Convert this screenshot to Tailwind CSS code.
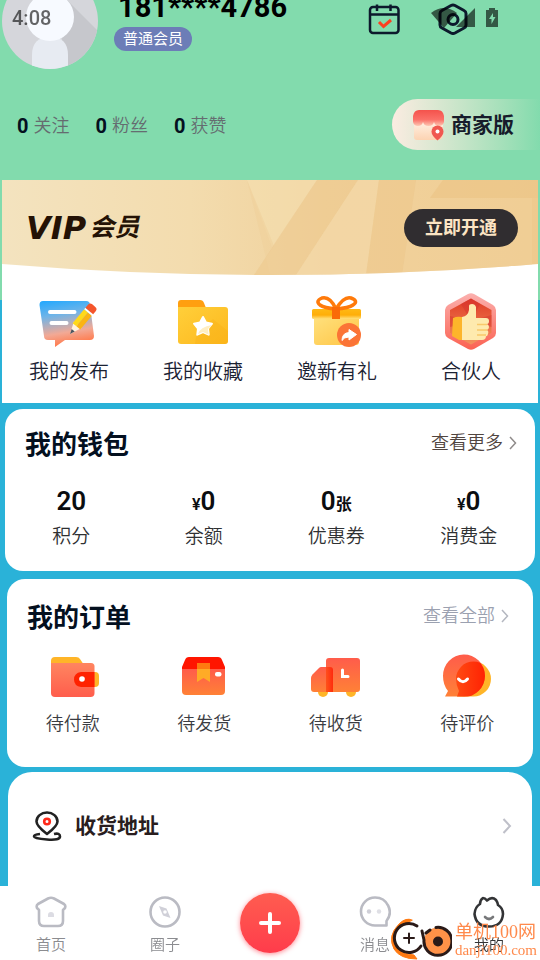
<!DOCTYPE html>
<html lang="zh-CN">
<head>
  <meta charset="UTF-8" />
  <meta name="viewport" content="width=device-width, initial-scale=1.0" />
  <title>我的</title>
  <script src="https://cdn.jsdelivr.net/npm/@tailwindcss/browser@4"></script>
</head>
<body class="min-h-screen overflow-x-hidden bg-[#2ab2d8] bg-[linear-gradient(#82dbad_300px,#2ab2d8_300px)] font-['Roboto','Noto_Sans_CJK_SC',sans-serif] text-[#1b2233]">

  <!-- Status bar -->
  <div class="fixed inset-x-0 top-0 z-20 flex h-9 items-center justify-between pl-3 pr-10 pointer-events-none">
    <span class="text-xl font-medium text-black/60">4:08</span>
    <svg class="h-5 w-[70px]" viewBox="0 0 70 20" fill="#000" fill-opacity=".6">
      <path d="M1 5Q14 -5 27 5L14 20Z" />
      <path d="M45 0V19H26Z" />
      <path d="M59 2V0h6v2h3v17H56V2ZM63 5l-4 6h2.500v5l4-7h-2.500Z" fill-rule="evenodd" />
    </svg>
  </div>

  <!-- Profile header -->
  <header>
    <div class="-mt-[27px] flex items-start pl-0.5 pr-[71px]">
      <svg class="size-24 shrink-0 rounded-full" viewBox="0 0 96 96">
        <rect width="96" height="96" fill="#d5d6db" />
        <path d="M65 27L96 58V96H64L60 66Z" fill="#c6c7cc" />
        <path d="M30 96V82q0-18 18-18t18 18v14Z" fill="#e7ebf2" />
        <circle cx="48" cy="44" r="24" fill="#f7faff" />
      </svg>
      <div class="ml-4 pt-[18px]">
        <h1 class="ml-1 text-[29px] font-bold leading-8 text-black">181****4786</h1>
        <p class="mt-1 inline-block rounded-full bg-[#6c7db7] px-[9px] text-[15px] leading-6 text-white">普通会员</p>
      </div>
      <div class="ml-auto flex gap-[37px] pt-[30px]">
        <button aria-label="签到">
          <svg class="size-8" viewBox="0 0 32 32" fill="none" stroke="#0c1a2c" stroke-width="2.500">
            <rect x="2" y="4" width="28.500" height="26" rx="3" />
            <path d="M2 11.500H30M9 1.500V8M22.500 1.500V8" />
            <path d="M11 19l4.500 4.500L23 17" stroke="#fb4020" stroke-width="3" />
          </svg>
        </button>
        <button aria-label="设置">
          <svg class="size-8" viewBox="0 0 32 32" fill="none" stroke="#0c1a2c" stroke-width="3">
            <path d="M14 2.500q2-1 4 0L27 7.500q2 1 2 3V22q0 2-2 3l-9 5q-2 1-4 0L5 25q-2-1-2-3V10.500q0-2 2-3Z" />
            <circle cx="16" cy="16.500" r="5" />
          </svg>
        </button>
      </div>
    </div>

    <div class="mt-[30px] mb-[30px] flex items-center justify-between pl-[17px]">
      <ul class="flex gap-[26px] pt-[3px] text-lg text-[#656c70]">
        <li class="flex items-center gap-[5px]"><b class="text-xl text-[#04101f]">0</b><span class="font-[350]">关注</span></li>
        <li class="flex items-center gap-[5px]"><b class="text-xl text-[#04101f]">0</b><span class="font-[350]">粉丝</span></li>
        <li class="flex items-center gap-[5px]"><b class="text-xl text-[#04101f]">0</b><span class="font-[350]">获赞</span></li>
      </ul>
      <a href="#" class="flex h-[51px] items-center gap-[7px] rounded-l-full bg-linear-to-r from-[#fbece1] to-[#82dbad] pl-5 pr-[26px] text-[21px] font-bold text-[#171c2b]">
        <svg class="size-8" viewBox="0 0 32 32">
          <defs>
            <linearGradient id="awning" x2="0" y2="1"><stop offset="0" stop-color="#f4524c" /><stop offset=".6" stop-color="#fb7068" /><stop offset="1" stop-color="#fdc9b4" /></linearGradient>
            <linearGradient id="shop" x2="0" y2="1"><stop stop-color="#fff0e2" /><stop offset="1" stop-color="#fcd3b2" /></linearGradient>
          </defs>
          <path d="M2 13H31V26q0 5-5 5H5q-3 0-3-3Z" fill="url(#shop)" />
          <path d="M7 1H26q5 0 6 6v6q-1 4-5 4t-5-4q-1 4-5.500 4t-5.500-4q-1 4-5 4t-5-4V7q1-6 6-6Z" fill="url(#awning)" />
          <path d="M25.500 31.500q-6-5-6-9a6 6 0 0 1 12 0q0 4-6 9Z" fill="#f05850" />
          <circle cx="25.500" cy="22.500" r="2" fill="#fff" />
        </svg>
        <span class="pt-[3px]">商家版</span>
      </a>
    </div>
  </header>

  <main class="pb-[74px]">
    <!-- VIP banner and shortcuts -->
    <section class="mx-0.5 bg-white">
      <div class="relative flex h-[95px] items-center justify-between pl-6 pr-5">
        <svg class="absolute inset-0 size-full" viewBox="0 0 536 95" preserveAspectRatio="none">
          <defs>
            <linearGradient id="gold"><stop offset="0" stop-color="#f3e3bf" /><stop offset=".35" stop-color="#f3dcae" /><stop offset=".6" stop-color="#f0d19c" /><stop offset="1" stop-color="#efca8e" /></linearGradient>
            <clipPath id="curve"><path d="M0 0H536V84Q268 106 0 84Z" /></clipPath>
          </defs>
          <g clip-path="url(#curve)">
            <rect width="536" height="95" fill="url(#gold)" />
            <path d="M245 0H315L270 67Z" fill="#f5dfb1" opacity=".6" />
            <path d="M245 0L272 66L252 95H268Q255 40 245 0Z" fill="#efd09a" opacity=".5" />
            <path d="M315 0H356L294 95H252Z" fill="#edc88b" opacity=".45" />
            <path d="M356 0H377L364 95H294Z" fill="#f3d9a8" opacity=".7" />
            <path d="M377 0H414L400 95H364Z" fill="#edc88c" opacity=".5" />
            <path d="M414 0H441L428 18H530V95H400Z" fill="#f2d29b" opacity=".5" />
            <path d="M441 0H536V18H428Z" fill="#ecc689" opacity=".7" />
          </g>
        </svg>
        <h2 class="relative flex items-center gap-[3px] font-bold italic text-[#241205]">
          <span class="font-['DejaVu_Sans',sans-serif] text-[32px] leading-8">VIP</span>
          <span class="text-[25px] leading-8">会员</span>
        </h2>
        <button class="relative h-[38px] rounded-full bg-[#302d30] px-[21px] text-lg font-bold text-[#fce4c3]">立即开通</button>
      </div>

      <nav class="grid grid-cols-4 pt-4 pb-4 text-xl leading-[30px]">
        <a href="#" class="flex flex-col items-center gap-1.5">
          <svg class="size-15" viewBox="0 0 60 60">
            <defs><linearGradient id="bubble" x2=".2" y2="1"><stop stop-color="#20a8ff" /><stop offset=".35" stop-color="#6fb4e8" /><stop offset=".75" stop-color="#f2a995" /><stop offset="1" stop-color="#ff7d50" /></linearGradient></defs>
            <path d="M4 10H47q4 0 4 4L55 45q0 4-4 4H26L16 56V49H9q-4 0-4-4L.5 14q0-4 3.500-4Z" fill="url(#bubble)" />
            <path d="M11 21H35.500M12.500 32H27.500" stroke="#fff" stroke-width="4" stroke-linecap="round" />
            <g transform="translate(31 43) rotate(-50)">
              <path d="M0 0L12-5V5Z" fill="#fff3e0" />
              <path d="M0 0L5-2V2Z" fill="#4c5560" />
              <path d="M10-5H28V0H10Z" fill="#ffd91a" />
              <path d="M10 0H28V5H10Z" fill="#fbb414" />
              <path d="M28-5h2V5h-2Z" fill="#fff" />
              <path d="M30-5h4q3 0 3 3v4q0 3-3 3h-4Z" fill="#f4552c" />
            </g>
          </svg>
          <span class="font-[350]">我的发布</span>
        </a>
        <a href="#" class="flex flex-col items-center gap-1.5">
          <svg class="size-15" viewBox="0 0 60 60">
            <defs><linearGradient id="folder" x2="1" y2="1"><stop stop-color="#ffcf3a" /><stop offset="1" stop-color="#fdb81e" /></linearGradient></defs>
            <path d="M8 9H27q3 0 4 3l2 5v9H5V12q0-3 3-3Z" fill="#ff9f10" />
            <path d="M5 16H52q3 0 3 3V50q0 3-3 3H8q-3 0-3-3Z" fill="url(#folder)" />
            <path d="M22 53Q22 42 32 35L40 28L55 40V50q0 3-3 3Z" fill="#f9ab12" opacity=".3" />
            <path d="M30 26l3 5.500 6 1.200-4 4.800.700 6.200L30 41l-5.700 2.700.700-6.200-4-4.800 6-1.200Z" fill="#fff" stroke="#fff" stroke-width="2" stroke-linejoin="round" />
            <path d="M25 43q2-7 14-9l-4 4 .700 5.700L30 41Z" fill="#ffeec2" />
          </svg>
          <span class="font-[350]">我的收藏</span>
        </a>
        <a href="#" class="flex flex-col items-center gap-1.5">
          <svg class="size-15" viewBox="0 0 60 60">
            <defs>
              <linearGradient id="gift" x2="1" y2="1"><stop stop-color="#ffe07c" /><stop offset="1" stop-color="#ffc545" /></linearGradient>
              <linearGradient id="lid" x2="0" y2="1"><stop stop-color="#ffb914" /><stop offset=".6" stop-color="#ffae08" /><stop offset="1" stop-color="#ffe07c" /></linearGradient>
            </defs>
            <path d="M7 27H52V51q0 3-3 3H10q-3 0-3-3Z" fill="url(#gift)" />
            <rect x="5" y="18" width="49" height="10" rx="1.500" fill="url(#lid)" />
            <path d="M29 18Q23 5 15 7Q8 10 13 14Q17 17 29 18Q37 5 44 7Q52 10 46 14Q42 17 29 18Z" fill="none" stroke="#ff7a0a" stroke-width="3.500" />
            <path d="M25 16h8V28h-8Z" fill="#fa6a08" />
            <circle cx="42" cy="44" r="12" fill="#fb7436" />
            <path d="M42 38.500L49.500 43.500L42 49V46Q37 46 35 49.500Q35 42 42 41.500Z" fill="#fff" stroke="#fff" stroke-linejoin="round" />
          </svg>
          <span class="font-[350]">邀新有礼</span>
        </a>
        <a href="#" class="flex flex-col items-center gap-1.5">
          <svg class="size-15" viewBox="0 0 60 60">
            <defs>
              <linearGradient id="hex" x2="0" y2="1"><stop stop-color="#fbb0ae" /><stop offset="1" stop-color="#fb6252" /></linearGradient>
              <linearGradient id="hexin" x2="0" y2="1"><stop stop-color="#df3a26" /><stop offset="1" stop-color="#f3935e" /></linearGradient>
            </defs>
            <path d="M27 3q3-1.500 6 0L52 14q3 2 3 5V42q0 3-3 5L33 58q-3 1.500-6 0L7 47q-3-2-3-5V19q0-3 3-5Z" fill="url(#hex)" />
            <path d="M30 7.500L50.500 19V42L30 53.500L9 42V19Z" fill="url(#hexin)" />
            <path d="M30 30L20 13L30 7.500L39 13ZM30 30L9 25V36ZM30 30L50.500 24V36Z" fill="#d63430" opacity=".5" />
            <path d="M12 27q4-2 9-1V49H18L11 45Z" fill="#fdb52a" />
            <path d="M21 26Q27 25 28 19V15q0-2 3-2t4 3V27H45q3 0 3 3t-2 3q2 1 2 3t-2 3q2 1 1 4t-2 2q0 4-4 4H21Z" fill="#feeaae" />
            <path d="M36 33.500H46M36 39H46M36 44H45" stroke="#f9c96a" stroke-width="1.500" />
          </svg>
          <span class="font-[350]">合伙人</span>
        </a>
      </nav>
    </section>

    <!-- Wallet -->
    <section class="mx-[5px] mt-1.5 rounded-[18px] bg-white pt-[18px] pb-[18px]">
      <div class="flex items-center justify-between pl-5 pr-[18px]">
        <h2 class="text-[26px] font-bold leading-9 text-[#04101f]">我的钱包</h2>
        <a href="#" class="flex items-center gap-1.5 text-lg leading-6 pb-1 font-[350] text-[#51453f]">查看更多
          <svg class="h-4 w-2" viewBox="0 0 8 16" fill="none" stroke="#8f8b8a" stroke-width="1.500"><path d="M1 2L6.500 8L1 14" /></svg>
        </a>
      </div>
      <dl class="mt-[21px] grid grid-cols-4 text-center">
        <div class="flex flex-col-reverse gap-0.5"><dt class="text-[19px] font-[350] leading-8 text-[#2f3133]">积分</dt><dd class="text-[26px] font-semibold leading-[35px] text-[#0b0d10]">20</dd></div>
        <div class="flex flex-col-reverse gap-0.5"><dt class="text-[19px] font-[350] leading-8 text-[#2f3133]">余额</dt><dd class="text-[26px] font-semibold leading-[35px] text-[#0b0d10]"><span class="text-base">¥</span>0</dd></div>
        <div class="flex flex-col-reverse gap-0.5"><dt class="text-[19px] font-[350] leading-8 text-[#2f3133]">优惠券</dt><dd class="text-[26px] font-semibold leading-[35px] text-[#0b0d10]">0<span class="text-base">张</span></dd></div>
        <div class="flex flex-col-reverse gap-0.5"><dt class="text-[19px] font-[350] leading-8 text-[#2f3133]">消费金</dt><dd class="text-[26px] font-semibold leading-[35px] text-[#0b0d10]"><span class="text-base">¥</span>0</dd></div>
      </dl>
    </section>

    <!-- Orders -->
    <section class="mx-[7px] mt-2 rounded-[18px] bg-white pt-[21px] pb-[30px]">
      <div class="flex items-center justify-between pl-5 pr-6">
        <h2 class="text-[26px] font-bold leading-9 text-[#04101f]">我的订单</h2>
        <a href="#" class="flex items-center gap-1.5 text-lg leading-6 pb-1 font-[350] text-[#9ba1b0]">查看全部
          <svg class="h-4 w-2" viewBox="0 0 8 16" fill="none" stroke="#b4b7c0" stroke-width="1.500"><path d="M1 2L6.500 8L1 14" /></svg>
        </a>
      </div>
      <svg class="absolute size-0">
        <defs>
          <linearGradient id="coral" x2="0" y2="1"><stop stop-color="#ff8560" /><stop offset="1" stop-color="#ff5d4c" /></linearGradient>
          <linearGradient id="orange" x2="0" y2="1"><stop stop-color="#ff5c4b" /><stop offset="1" stop-color="#ff8136" /></linearGradient>
          <linearGradient id="red"><stop stop-color="#ff4a12" /><stop offset="1" stop-color="#ff1a00" /></linearGradient>
        </defs>
      </svg>
      <nav class="mt-3 grid grid-cols-4 text-lg leading-[26px] text-[#3a3c42]">
        <a href="#" class="flex flex-col items-center gap-[11px]">
          <svg class="h-[52px] w-15" viewBox="0 0 60 52">
            <path d="M12 9H33q3 0 4 2l4 6V30H8V13q0-4 4-4Z" fill="#ffb528" />
            <rect x="36" y="24" width="20" height="15" rx="4" fill="#ffb528" />
            <path d="M8 15H48q3.500 0 3.500 3.500V45q0 4-4 4H12q-4 0-4-4Z" fill="url(#coral)" />
            <path d="M38 24H51.500V39H38q-7-1-7-7.500T38 24Z" fill="#ff2200" />
            <circle cx="39" cy="31" r="2.800" fill="#fff" />
          </svg>
          <span class="font-[350]">待付款</span>
        </a>
        <a href="#" class="flex flex-col items-center gap-[11px]">
          <svg class="h-[52px] w-15" viewBox="0 0 60 52">
            <path d="M15 9H44q3 0 4 3l3 7v4H8V19l3-7q1-3 4-3Z" fill="#ff1500" />
            <path d="M8 21H51V43q0 4-4 4H12q-4 0-4-4Z" fill="url(#orange)" />
            <path d="M23 21H36V34L29.500 30L23 34Z" fill="#ffab26" />
            <path d="M23 15H36V21H23Z" fill="#ff7a10" />
            <rect x="41" y="24" width="6.500" height="4.500" rx="2" fill="#fff" />
          </svg>
          <span class="font-[350]">待发货</span>
        </a>
        <a href="#" class="flex flex-col items-center gap-[11px]">
          <svg class="h-[52px] w-15" viewBox="0 0 60 52">
            <circle cx="17" cy="44" r="5" fill="#ffb528" />
            <circle cx="45" cy="44" r="5" fill="#ffb528" />
            <path d="M23 10H51q3 0 3 3V41q0 3-3 3H20V13q0-3 3-3Z" fill="url(#orange)" />
            <path d="M15 19H24q3 0 3 3V44H8q-3 0-3-3V30q0-2 1.500-3.500L13 20q1-1 2-1Z" fill="url(#orange)" />
            <path d="M20 19H24q3 0 3 3V44H20Z" fill="url(#red)" opacity=".8" />
            <path d="M36.500 22V28.500H42" fill="none" stroke="#fff" stroke-width="3" stroke-linecap="round" />
          </svg>
          <span class="font-[350]">待收货</span>
        </a>
        <a href="#" class="flex flex-col items-center gap-[11px]">
          <svg class="h-[52px] w-15" viewBox="0 0 60 52">
            <defs><clipPath id="chat"><path d="M8 48.500L11 43Q6 37 6 28A21 21 0 1 1 27 49Z" /></clipPath></defs>
            <path d="M20 48.500L22 43Q19 37 19 31A17.500 17.500 0 1 1 36.500 48.500Z" fill="#ffb528" />
            <path d="M8 48.500L11 43Q6 37 6 28A21 21 0 1 1 27 48.500Z" fill="url(#orange)" />
            <path d="M20 48.500L22 43Q19 37 19 31A17.500 17.500 0 1 1 36.500 48.500Z" fill="url(#red)" clip-path="url(#chat)" />
            <path d="M21.500 31Q26 36.500 30.500 31" fill="none" stroke="#fff" stroke-width="3" stroke-linecap="round" />
          </svg>
          <span class="font-[350]">待评价</span>
        </a>
      </nav>
    </section>

    <!-- Address -->
    <section class="mx-2 mt-[5px] rounded-t-3xl bg-white">
      <a href="#" class="flex items-center pt-[37px] pb-13 pl-6 pr-5">
        <svg class="size-[30px]" viewBox="0 0 30 30" fill="none" stroke="#222" stroke-width="2.600">
          <path d="M15 23Q4.500 15 4.500 10.500A10.500 9 0 0 1 25.500 10.500Q25.500 15 15 23Z" stroke-linejoin="round" />
          <path d="M8 23Q2 23.500 2 25.500T15 28.500T28 25.500T22 23" />
          <circle cx="15" cy="10.500" r="2.800" stroke="#ff2a1a" />
        </svg>
        <span class="ml-[13px] pt-0.5 text-[21px] font-bold text-[#291d1e]">收货地址</span>
        <svg class="ml-auto h-4 w-2.5" viewBox="0 0 10 16" fill="none" stroke="#bfc0c9" stroke-width="2"><path d="M1.500 1L8 8L1.500 15" /></svg>
      </a>
    </section>
  </main>

  <!-- Tab bar -->
  <nav class="fixed inset-x-0 bottom-0 z-10 grid h-[74px] grid-cols-[102fr_126fr_84fr_126fr_102fr] justify-items-center bg-white text-[15px] leading-5 text-[#8b8c90]">
    <a href="#" class="flex flex-col items-center gap-[7px] pt-[10px]">
      <svg class="size-8" viewBox="0 0 32 32" fill="none" stroke="#babbc3" stroke-width="2.600">
        <path d="M13 2.500q3-1.500 6 0L29 8q2 1.500 1 4l-2 2V25q0 5-5 5H9q-5 0-5-5V14L2 12q-1-2.500 1-4Z" stroke-linejoin="round" />
        <path d="M13 21v-2q0-3 3-3t3 3v2Z" fill="#dcdce3" stroke="none" />
      </svg>
      <span class="font-[350]">首页</span>
    </a>
    <a href="#" class="flex flex-col items-center gap-[7px] pt-[10px]">
      <svg class="size-8" viewBox="0 0 32 32" fill="none" stroke="#babbc3" stroke-width="2.600">
        <circle cx="16" cy="16" r="14.500" />
        <path d="M10 10l7.500 2.500 4 9.500-7.500-2.500Z" fill="#d0d0d8" stroke="none" />
        <circle cx="16" cy="16" r="1.800" fill="#fff" stroke="none" />
      </svg>
      <span class="font-[350]">圈子</span>
    </a>
    <button aria-label="发布" class="mt-[7px] flex size-[60px] items-center justify-center rounded-full bg-linear-to-b from-[#ff5c50] to-[#ff3b4b] shadow-[0_1px_5px_#ff3b4b99]">
      <svg class="size-6" viewBox="0 0 24 24" stroke="#fff" stroke-width="4" stroke-linecap="round"><path d="M12 3V21M3 12H21" /></svg>
    </button>
    <a href="#" class="flex flex-col items-center gap-[7px] pt-[10px]">
      <svg class="size-8" viewBox="0 0 32 32" fill="none" stroke="#babbc3" stroke-width="2.600">
        <path d="M16 1.500A14.500 14.500 0 0 1 27.500 25V29.500H16A14 14 0 0 1 16 1.500Z" stroke-linejoin="round" />
        <circle cx="10" cy="15.500" r="2.200" fill="#cfcfd7" stroke="none" />
        <circle cx="20" cy="15.500" r="2.200" fill="#dfdfe5" stroke="none" />
      </svg>
      <span class="font-[350]">消息</span>
    </a>
    <a href="#" class="flex flex-col items-center gap-[7px] pt-[10px] text-[#333]">
      <svg class="size-8" viewBox="0 0 32 32" fill="none" stroke="#333436" stroke-width="2.600" stroke-linecap="round" stroke-linejoin="round">
        <path d="M10 2Q12 2 14 4.500Q19 0 23 4Q25 7 25 9Q30 12 30 18Q29 30.500 16 30.500T1.500 18Q2 11 7 8Q7 4 10 2Z" />
        <path d="M12 21Q16 25 20 21" stroke="#77787a" />
      </svg>
      <span class="font-[350]">我的</span>
    </a>
  </nav>

  <!-- Site mark -->
  <div class="fixed bottom-0 right-[3px] z-30 flex items-center gap-[3px] text-[#ff8a4c] pointer-events-none">
    <svg class="h-11 w-[62px]" viewBox="0 0 62 44" fill="none" stroke-linecap="round">
      <path d="M22 4Q16 1 9 8Q-3 20 4 33Q10 43 27 43L24 39Q12 38 8 31Q2 20 13 9Z" fill="#ff7a12" stroke="#ff7a12" />
      <circle cx="19" cy="22" r="14" fill="#fff" />
      <path d="M27 10A14.500 14.500 0 1 0 31 30" stroke="#2a1a18" stroke-width="3" />
      <path d="M19 17.500V27M14 22H24" stroke="#2a1a18" stroke-width="2" />
      <circle cx="48" cy="25.500" r="14" fill="#ff9248" />
      <path d="M46 11.500A14 14 0 1 1 34 24L32 15M36 17L40 14" stroke="#2a1a18" stroke-width="3" />
      <circle cx="48" cy="25.500" r="5" fill="#2a1a18" />
    </svg>
    <p class="flex flex-col pt-1.5 font-['Liberation_Serif','Noto_Sans_CJK_SC',serif] text-lg leading-[18px]">
      <span>单机100网</span>
      <span class="text-[15px] leading-[18px]">danji100.com</span>
    </p>
  </div>
</body>
</html>
